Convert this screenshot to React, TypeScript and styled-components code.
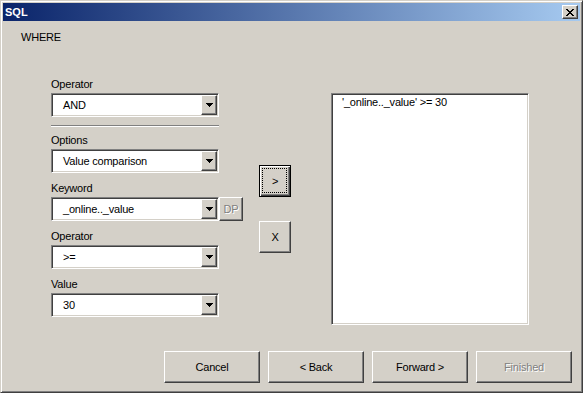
import React from 'react';
import styled, { createGlobalStyle, css } from 'styled-components';

const GlobalStyle = createGlobalStyle`
    html, body {
        margin: 0;
        padding: 0;
        background: #d4d0c8;
    }
    body {
        font-family: "Liberation Sans", Arial, sans-serif;
        font-size: 11px;
        letter-spacing: -0.2px;
        color: #000;
    }
`;

// classic win2000 bevels
const raised = css`
    border-top: 1px solid #ffffff;
    border-left: 1px solid #ffffff;
    border-right: 1px solid #404040;
    border-bottom: 1px solid #404040;
    box-shadow: inset -1px -1px #808080;
`;

const sunken = css`
    border-top: 1px solid #808080;
    border-left: 1px solid #808080;
    border-right: 1px solid #ffffff;
    border-bottom: 1px solid #ffffff;
    box-shadow: inset 1px 1px #404040, inset -1px -1px #d4d0c8;
`;

const Window = styled.div`
    width: 583px;
    height: 393px;
    box-sizing: border-box;
    display: flex;
    flex-direction: column;
    background: #d4d0c8;
    border-top: 1px solid #d4d0c8;
    border-left: 1px solid #d4d0c8;
    border-right: 1px solid #404040;
    border-bottom: 1px solid #404040;
    box-shadow: inset 1px 1px #ffffff, inset -1px -1px #808080;
    padding: 2px;
`;

const TitleBar = styled.div`
    height: 18px;
    flex-shrink: 0;
    display: flex;
    align-items: center;
    justify-content: space-between;
    padding: 0 2px 0 2px;
    background: linear-gradient(to right, #0a246a, #a6caf0);
`;

const TitleText = styled.span`
    color: #ffffff;
    font-weight: bold;
    font-size: 11px;
    letter-spacing: 0;
`;

const CloseButton = styled.div`
    width: 16px;
    height: 14px;
    box-sizing: border-box;
    display: flex;
    align-items: center;
    justify-content: center;
    background: #d4d0c8;
    ${raised};
`;

const Content = styled.div`
    flex: 1;
    display: flex;
    flex-direction: column;
    padding: 10px 8px 7px 18px;
`;

const Caption = styled.div`
    line-height: 13px;
`;

const MainRow = styled.div`
    display: flex;
    align-items: flex-start;
    margin-top: 34px;
    padding-left: 30px;
`;

const LeftColumn = styled.div`
    display: flex;
    flex-direction: column;
    width: 192px;
`;

const Field = styled.div`
    display: flex;
    flex-direction: column;

    & + & {
        margin-top: 9px;
    }
`;

const FieldLabel = styled.div`
    line-height: 13px;
    margin-bottom: 2px;
`;

const ComboRow = styled.div`
    display: flex;
`;

const Combo = styled.div`
    width: 168px;
    height: 24px;
    box-sizing: border-box;
    display: flex;
    align-items: stretch;
    background: #ffffff;
    ${sunken};
    padding: 1px;
`;

const ComboText = styled.div`
    flex: 1;
    display: flex;
    align-items: center;
    padding-left: 10px;
`;

const DropButton = styled.div`
    width: 16px;
    box-sizing: border-box;
    display: flex;
    align-items: center;
    justify-content: center;
    background: #d4d0c8;
    ${raised};
`;

const Divider = styled.div`
    width: 168px;
    height: 0;
    border-top: 1px solid #808080;
    border-bottom: 1px solid #ffffff;
    margin: 8px 0 7px;
`;

const disabledText = css`
    color: #808080;
    text-shadow: 1px 1px 0 #ffffff;
`;

const Button = styled.div<{ $w: number; $disabled?: boolean }>`
    width: ${(p) => p.$w}px;
    height: ${(p) => (p.$w < 30 ? 24 : 32)}px;
    box-sizing: border-box;
    display: flex;
    align-items: center;
    justify-content: center;
    background: #d4d0c8;
    ${raised};
    ${(p) => p.$disabled && disabledText};
`;

const DefaultButton = styled.div`
    position: relative;
    width: 32px;
    height: 32px;
    box-sizing: border-box;
    display: flex;
    align-items: center;
    justify-content: center;
    background: #d4d0c8;
    border: 1px solid #000000;
    box-shadow: inset 1px 1px #ffffff, inset -1px -1px #404040, inset -2px -2px #808080;

    &::after {
        content: '';
        position: absolute;
        inset: 2px 3px 3px 2px;
        border: 1px dotted #000000;
    }
`;

const MiddleColumn = styled.div`
    display: flex;
    flex-direction: column;
    gap: 24px;
    margin-left: 16px;
    margin-top: 87px;
`;

const ListBox = styled.div`
    width: 198px;
    height: 232px;
    box-sizing: border-box;
    margin-left: 40px;
    margin-top: 15px;
    background: #ffffff;
    ${sunken};
    padding: 2px 10px;
    line-height: 13px;
`;

const Footer = styled.div`
    margin-top: auto;
    display: flex;
    justify-content: flex-end;
    gap: 8px;
`;

const Arrow = () => (
    <svg width="7" height="4" viewBox="0 0 7 4" shapeRendering="crispEdges">
        <path d="M0 0h7v1H0zM1 1h5v1H1zM2 2h3v1H2zM3 3h1v1H3z" fill="#000" />
    </svg>
);

const CloseGlyph = () => (
    <svg width="8" height="7" viewBox="0 0 8 7" shapeRendering="crispEdges">
        <path
            d="M0 0h2v1H0zM6 0h2v1H6zM1 1h2v1H1zM5 1h2v1H5zM2 2h4v1H2zM3 3h2v1H3zM2 4h4v1H2zM1 5h2v1H1zM5 5h2v1H5zM0 6h2v1H0zM6 6h2v1H6z"
            fill="#000"
        />
    </svg>
);

const ComboBox: React.FC<{ value: string }> = ({ value }) => (
    <Combo>
        <ComboText>{value}</ComboText>
        <DropButton>
            <Arrow />
        </DropButton>
    </Combo>
);

const App: React.FC = () => {
    return (
        <>
            <GlobalStyle />
            <Window>
                <TitleBar>
                    <TitleText>SQL</TitleText>
                    <CloseButton>
                        <CloseGlyph />
                    </CloseButton>
                </TitleBar>
                <Content>
                    <Caption>WHERE</Caption>
                    <MainRow>
                        <LeftColumn>
                            <Field>
                                <FieldLabel>Operator</FieldLabel>
                                <ComboBox value="AND" />
                            </Field>
                            <Divider />
                            <Field>
                                <FieldLabel>Options</FieldLabel>
                                <ComboBox value="Value comparison" />
                            </Field>
                            <Field>
                                <FieldLabel>Keyword</FieldLabel>
                                <ComboRow>
                                    <ComboBox value="_online.._value" />
                                    <Button $w={24} $disabled>DP</Button>
                                </ComboRow>
                            </Field>
                            <Field>
                                <FieldLabel>Operator</FieldLabel>
                                <ComboBox value=">=" />
                            </Field>
                            <Field>
                                <FieldLabel>Value</FieldLabel>
                                <ComboBox value="30" />
                            </Field>
                        </LeftColumn>
                        <MiddleColumn>
                            <DefaultButton>&gt;</DefaultButton>
                            <Button $w={32}>X</Button>
                        </MiddleColumn>
                        <ListBox>'_online.._value' &gt;= 30</ListBox>
                    </MainRow>
                    <Footer>
                        <Button $w={96}>Cancel</Button>
                        <Button $w={96}>&lt; Back</Button>
                        <Button $w={96}>Forward &gt;</Button>
                        <Button $w={96} $disabled>Finished</Button>
                    </Footer>
                </Content>
            </Window>
        </>
    );
};

export default App;
